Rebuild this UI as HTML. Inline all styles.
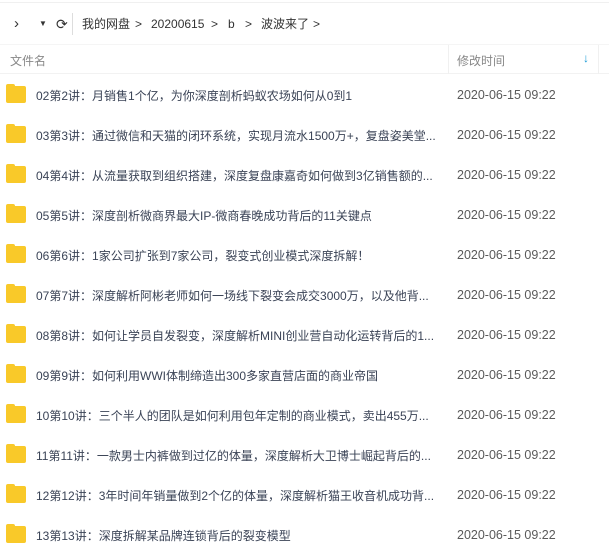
<!DOCTYPE html>
<html><head><meta charset="utf-8"><style>
*{margin:0;padding:0;box-sizing:border-box}
body{width:609px;height:532px;overflow:hidden;background:#fff;font-family:"Liberation Sans","Noto Sans CJK SC",sans-serif;color:#424e67;font-size:12px;position:relative}
.top{position:absolute;left:0;top:0;width:609px;height:3px;border-bottom:1px solid #f0f0f0}
.nav{position:absolute;top:14px;left:0;height:20px;font-size:12px;color:#333}
.nav span{position:absolute;top:0;white-space:nowrap;line-height:20px}
.hdr{position:absolute;top:44px;left:0;width:609px;height:30px;border-bottom:1px solid #f2f2f2;border-top:1px solid #f5f5f5;color:#888;font-size:12px}
.hdr span{position:absolute;top:7px}
.row{position:absolute;left:0;width:609px;height:20px}
.fold{position:absolute;left:6px;top:1px;width:20px;height:17px;background:#f9c929;border-radius:2px}
.fold:before{content:"";position:absolute;left:0;top:-2px;width:9px;height:4px;background:#f9c929;border-radius:2px 2px 0 0}
.name{position:absolute;left:36px;top:2px;white-space:nowrap;color:#3a4356}
.date{position:absolute;left:457px;top:3px;color:#5a5a5a;font-size:12.5px}
</style></head><body>
<div class="top"></div>
<div class="nav">
<span style="left:14px;font-size:15px;color:#333">&#x203A;</span>
<span style="left:39px;font-size:8px">▼</span>
<span style="left:56px;font-size:14px">⟳</span>
<span style="left:72px;top:-1px;width:1px;height:22px;background:#ddd"></span>
<span style="left:82px">我的网盘</span>
<span style="left:135px">&gt;</span>
<span style="left:151px">20200615</span>
<span style="left:211px">&gt;</span>
<span style="left:228px">b</span>
<span style="left:245px">&gt;</span>
<span style="left:261px">波波来了</span>
<span style="left:313px">&gt;</span>
</div>
<div class="hdr">
<span style="left:10px">文件名</span>
<span style="left:448px;top:0;height:29px;width:1px;background:#f0f0f0"></span>
<span style="left:457px">修改时间</span>
<span style="left:583px;color:#1a9ad6;font-weight:bold;top:6px">↓</span>
<span style="left:598px;top:0;height:29px;width:1px;background:#f0f0f0"></span>
</div>
<div class="row" style="top:85px"><div class="fold"></div><div class="name">02第2讲：月销售1个亿，为你深度剖析蚂蚁农场如何从0到1</div><div class="date">2020-06-15 09:22</div></div>
<div class="row" style="top:125px"><div class="fold"></div><div class="name">03第3讲：通过微信和天猫的闭环系统，实现月流水1500万+，复盘姿美堂...</div><div class="date">2020-06-15 09:22</div></div>
<div class="row" style="top:165px"><div class="fold"></div><div class="name">04第4讲：从流量获取到组织搭建，深度复盘康嘉奇如何做到3亿销售额的...</div><div class="date">2020-06-15 09:22</div></div>
<div class="row" style="top:205px"><div class="fold"></div><div class="name">05第5讲：深度剖析微商界最大IP-微商春晚成功背后的11关键点</div><div class="date">2020-06-15 09:22</div></div>
<div class="row" style="top:245px"><div class="fold"></div><div class="name">06第6讲：1家公司扩张到7家公司，裂变式创业模式深度拆解！</div><div class="date">2020-06-15 09:22</div></div>
<div class="row" style="top:285px"><div class="fold"></div><div class="name">07第7讲：深度解析阿彬老师如何一场线下裂变会成交3000万，以及他背...</div><div class="date">2020-06-15 09:22</div></div>
<div class="row" style="top:325px"><div class="fold"></div><div class="name">08第8讲：如何让学员自发裂变，深度解析MINI创业营自动化运转背后的1...</div><div class="date">2020-06-15 09:22</div></div>
<div class="row" style="top:365px"><div class="fold"></div><div class="name">09第9讲：如何利用WWI体制缔造出300多家直营店面的商业帝国</div><div class="date">2020-06-15 09:22</div></div>
<div class="row" style="top:405px"><div class="fold"></div><div class="name">10第10讲：三个半人的团队是如何利用包年定制的商业模式，卖出455万...</div><div class="date">2020-06-15 09:22</div></div>
<div class="row" style="top:445px"><div class="fold"></div><div class="name">11第11讲：一款男士内裤做到过亿的体量，深度解析大卫博士崛起背后的...</div><div class="date">2020-06-15 09:22</div></div>
<div class="row" style="top:485px"><div class="fold"></div><div class="name">12第12讲：3年时间年销量做到2个亿的体量，深度解析猫王收音机成功背...</div><div class="date">2020-06-15 09:22</div></div>
<div class="row" style="top:525px"><div class="fold"></div><div class="name">13第13讲：深度拆解某品牌连锁背后的裂变模型</div><div class="date">2020-06-15 09:22</div></div>
</body></html>
